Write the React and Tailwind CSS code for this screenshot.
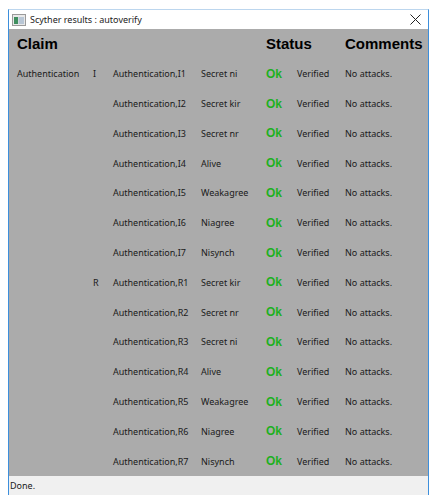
import React from "react";

const rows = [
  ["Authentication", "I", "Authentication,I1", "Secret ni"],
  ["", "", "Authentication,I2", "Secret kir"],
  ["", "", "Authentication,I3", "Secret nr"],
  ["", "", "Authentication,I4", "Alive"],
  ["", "", "Authentication,I5", "Weakagree"],
  ["", "", "Authentication,I6", "Niagree"],
  ["", "", "Authentication,I7", "Nisynch"],
  ["", "R", "Authentication,R1", "Secret kir"],
  ["", "", "Authentication,R2", "Secret nr"],
  ["", "", "Authentication,R3", "Secret ni"],
  ["", "", "Authentication,R4", "Alive"],
  ["", "", "Authentication,R5", "Weakagree"],
  ["", "", "Authentication,R6", "Niagree"],
  ["", "", "Authentication,R7", "Nisynch"],
];

const cols = "grid grid-cols-[76px_20px_88px_65px_31px_48px_1fr]";

export default function App() {
  return (
    <div className="min-h-[502px] w-[436px] bg-white pl-2 pt-[9px] font-['Noto_Sans',sans-serif]">
      <div className="w-[421px] border-x border-t border-x-[#3d8fdc] border-t-[#bcd6ee]">
        {/* title bar */}
        <div className="flex h-[19px] items-center bg-white pl-[3px] pr-[7px]">
          <svg width="14" height="12" viewBox="0 0 14 12" className="mr-[4px]">
            <rect x="0.5" y="0.5" width="13" height="11" fill="#e9e9e9" stroke="#9a9a9a" />
            <rect x="2" y="3" width="4" height="7" fill="#3f8f5f" />
            <rect x="6.5" y="3" width="5.5" height="7" fill="#b9c7d6" />
          </svg>
          <span className="text-[9px] leading-none text-[#222]">Scyther results : autoverify</span>
          <svg width="11" height="11" viewBox="0 0 11 11" className="ml-auto">
            <path d="M0.5 0.5 L10.5 10.5 M10.5 0.5 L0.5 10.5" stroke="#222" strokeWidth="1" />
          </svg>
        </div>

        {/* results */}
        <div className="bg-[#ababab] pl-2">
          <div className={`${cols} h-[30px] items-center font-['Liberation_Sans',sans-serif] text-[15px] font-bold text-black`}>
            <span className="col-span-4">Claim</span>
            <span className="col-span-2">Status</span>
            <span>Comments</span>
          </div>
          {rows.map((r, i) => (
            <div key={i} className={`${cols} h-[29.8px] items-center text-[9px] text-[#1a1a1a]`}>
              <span>{r[0]}</span>
              <span>{r[1]}</span>
              <span>{r[2]}</span>
              <span>{r[3]}</span>
              <span className="font-['Liberation_Sans',sans-serif] text-[12px] font-bold text-[#1fb01f]">Ok</span>
              <span>Verified</span>
              <span>No attacks.</span>
            </div>
          ))}
        </div>

        {/* status bar */}
        <div className="flex h-[19px] items-center bg-[#f0f0f0] pl-[1px] text-[9px] text-[#1a1a1a]">
          Done.
        </div>
      </div>
    </div>
  );
}
